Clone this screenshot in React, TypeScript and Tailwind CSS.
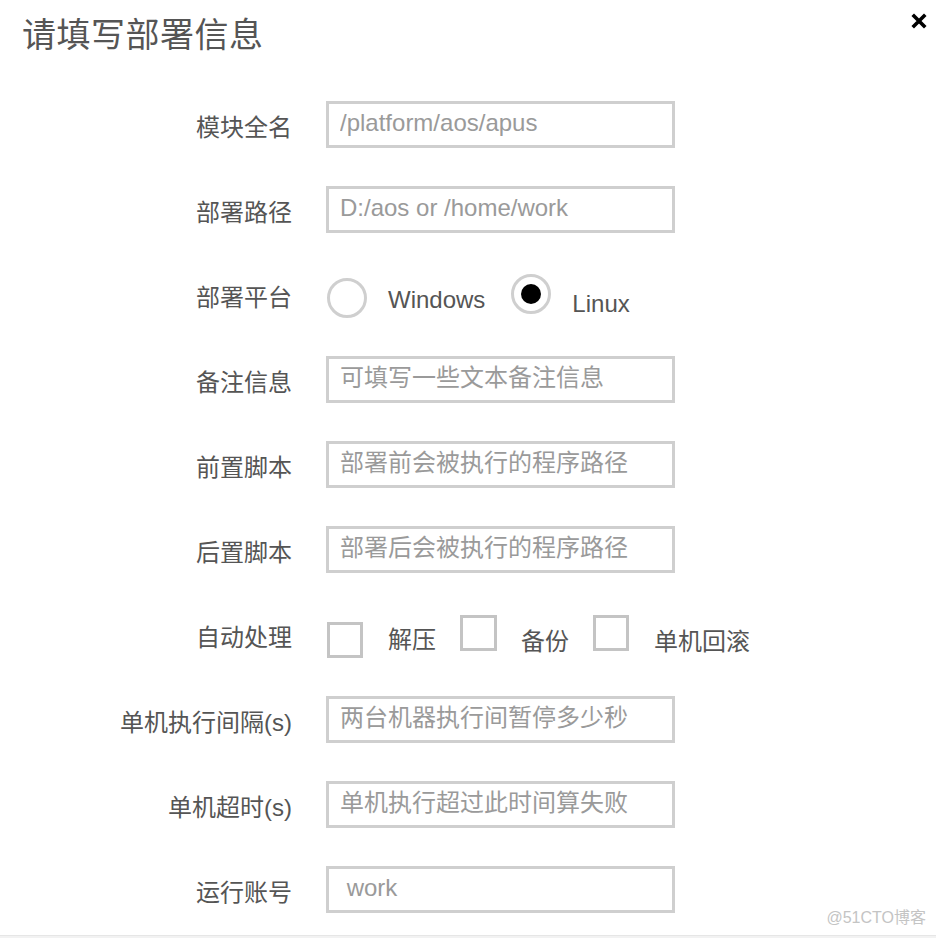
import React from "react";

const font = { fontFamily: '"Liberation Sans", "Noto Sans CJK SC", sans-serif' };

const textRows: { label: string; placeholder: string }[] = [
  { label: "模块全名", placeholder: "/platform/aos/apus" },
  { label: "部署路径", placeholder: "D:/aos or /home/work" },
];

const textRows2: { label: string; placeholder: string }[] = [
  { label: "备注信息", placeholder: "可填写一些文本备注信息" },
  { label: "前置脚本", placeholder: "部署前会被执行的程序路径" },
  { label: "后置脚本", placeholder: "部署后会被执行的程序路径" },
];

const textRows3: { label: string; placeholder: string }[] = [
  { label: "单机执行间隔(s)", placeholder: "两台机器执行间暂停多少秒" },
  { label: "单机超时(s)", placeholder: "单机执行超过此时间算失败" },
  { label: "运行账号", placeholder: " work" },
];

function Label({ children }: { children: React.ReactNode }) {
  return (
    <div className="w-[292px] shrink-0 text-right text-[24px] text-[#555] mt-[6px] whitespace-nowrap">
      {children}
    </div>
  );
}

function TextRow({ label, placeholder }: { label: string; placeholder: string }) {
  return (
    <div className="flex items-center h-[47px]">
      <Label>{label}</Label>
      <input
        readOnly
        placeholder={placeholder}
        className="ml-[34px] w-[349px] h-[47px] border-[3px] border-[#cfcfcf] px-[11px] pb-[4px] text-[24px] text-[#555] placeholder:text-[#9a9a9a] outline-none bg-white"
        style={font}
      />
    </div>
  );
}

export default function App() {
  return (
    <div className="relative h-[938px] w-[936px] overflow-hidden bg-white" style={font}>
      <div className="pl-[22px] pt-[12px] h-[101px]">
        <h1 className="text-[34px] leading-[46px] text-[#555] tracking-[0.5px]">请填写部署信息</h1>
      </div>
      <button className="absolute right-[9px] top-[13px] w-[16px] h-[16px]">
        <svg viewBox="0 0 16 16" className="w-[16px] h-[16px]">
          <path d="M3 3 L13 13 M13 3 L3 13" stroke="#000" strokeWidth="3.6" strokeLinecap="square" />
        </svg>
      </button>

      <div className="flex flex-col gap-[38px]">
        {textRows.map((r) => (
          <TextRow key={r.label} {...r} />
        ))}

        {/* 部署平台 */}
        <div className="flex items-center h-[47px]">
          <Label>部署平台</Label>
          <div className="ml-[35px] flex items-center">
            <span className="w-[40px] h-[40px] rounded-full border-[3px] border-[#cfcfcf] mt-[6px]" />
            <span className="ml-[21px] text-[24px] text-[#555] mt-[10px]">Windows</span>
            <span className="ml-[26px] w-[40px] h-[40px] rounded-full border-[3px] border-[#cfcfcf] flex items-center justify-center -mt-[2px]">
              <span className="w-[20px] h-[20px] rounded-full bg-black" />
            </span>
            <span className="ml-[21px] text-[24px] text-[#555] mt-[18px]">Linux</span>
          </div>
        </div>

        {textRows2.map((r) => (
          <TextRow key={r.label} {...r} />
        ))}

        {/* 自动处理 */}
        <div className="flex items-center h-[47px]">
          <Label>自动处理</Label>
          <div className="ml-[35px] flex items-center">
            <span className="w-[36px] h-[36px] border-[3px] border-[#c4c4c4] mt-[10px]" />
            <span className="ml-[25px] text-[24px] text-[#555] mt-[10px]">解压</span>
            <span className="ml-[24px] w-[37px] h-[36px] border-[3px] border-[#c4c4c4] -mt-[4px]" />
            <span className="ml-[24px] text-[24px] text-[#555] mt-[14px]">备份</span>
            <span className="ml-[24px] w-[36px] h-[36px] border-[3px] border-[#c4c4c4] -mt-[4px]" />
            <span className="ml-[25px] text-[24px] text-[#555] mt-[14px]">单机回滚</span>
          </div>
        </div>

        {textRows3.map((r) => (
          <TextRow key={r.label} {...r} />
        ))}
      </div>

      <div className="absolute right-[10px] top-[906px] text-[16px] text-[#c4c4c4]">@51CTO博客</div>
      <div className="absolute left-0 right-0 bottom-0 h-[3px] bg-[#f2f2f2] border-t border-[#e6e6e6]" />
    </div>
  );
}
